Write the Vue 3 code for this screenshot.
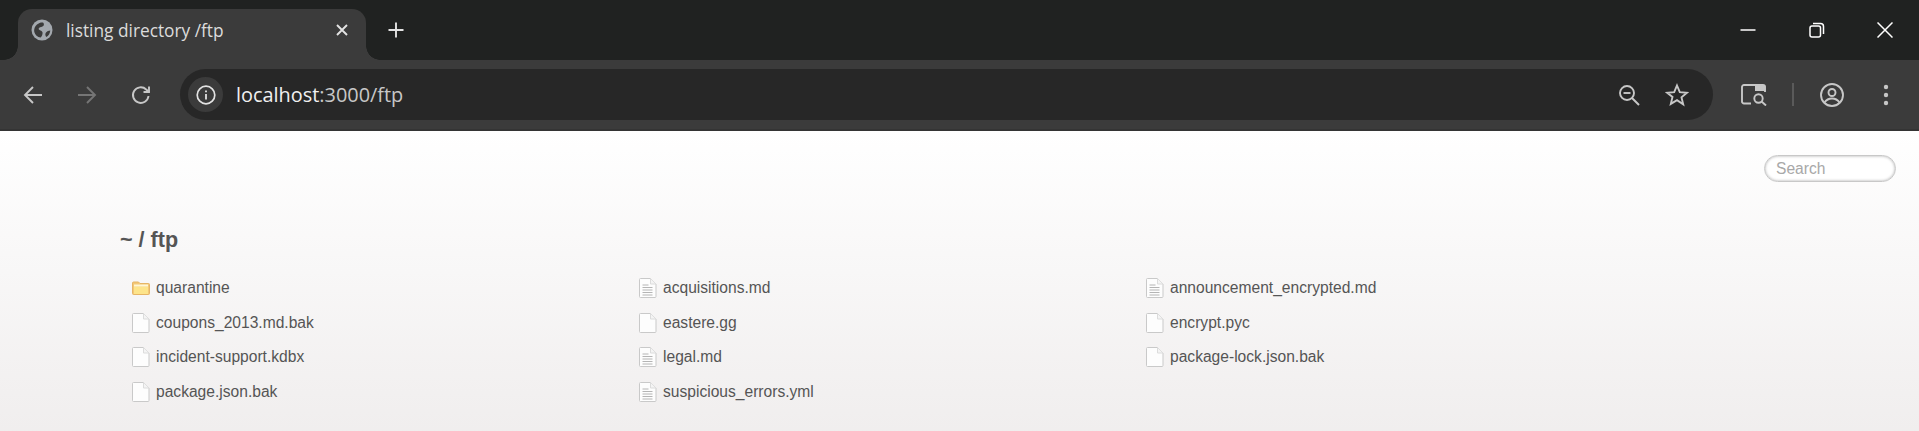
<script setup>
const doc = 'doc', blank = 'blank', folder = 'folder'
const files = [
  { name: 'quarantine', icon: folder },
  { name: 'acquisitions.md', icon: doc },
  { name: 'announcement_encrypted.md', icon: doc },
  { name: 'coupons_2013.md.bak', icon: blank },
  { name: 'eastere.gg', icon: blank },
  { name: 'encrypt.pyc', icon: blank },
  { name: 'incident-support.kdbx', icon: blank },
  { name: 'legal.md', icon: doc },
  { name: 'package-lock.json.bak', icon: blank },
  { name: 'package.json.bak', icon: blank },
  { name: 'suspicious_errors.yml', icon: doc },
]
</script>

<template>
  <div class="window">
    <header class="tabstrip">
      <div class="tab">
        <svg class="globe" width="22" height="22" viewBox="0 0 22 22">
          <circle cx="11" cy="11" r="10.500" fill="#a3a8ae" />
          <path d="M6 5.500c1.800-1.600 4-2.200 6-2 1 .9 1.200 2.300.5 3.300-1.200 1.400-3.300 1-4.500 2.200-.9 1 .1 2.200 1.500 2.500 1.500.4 2.400 1.600 2 3.300-.3 1.600-1 3-1.800 3.800C6.500 18 4 16 3.300 13c-.6-2.800.6-5.700 2.700-7.500z" fill="#3b3b3b" />
          <path d="M15 13.500c1-1.300 2.600-2 4.300-2-.3 3-1.700 5.300-4.100 6.500-1-1.500-1.200-3.300-.2-4.500z" fill="#3b3b3b" />
        </svg>
        <span class="tab-title">listing directory /ftp</span>
        <svg class="tab-close" width="12" height="12" viewBox="0 0 12 12">
          <path d="M1 1l10 10M11 1L1 11" stroke="#e3e3e3" stroke-width="1.900" fill="none" />
        </svg>
      </div>
      <svg class="new-tab" width="16" height="16" viewBox="0 0 16 16">
        <path d="M8 .5v15M.5 8h15" stroke="#e3e3e3" stroke-width="1.900" fill="none" />
      </svg>
      <div class="window-controls">
        <svg width="16" height="16" viewBox="0 0 16 16"><path d="M.5 8h15" stroke="#fff" stroke-width="1.500" /></svg>
        <svg width="16" height="16" viewBox="0 0 16 16" fill="none" stroke="#fff" stroke-width="1.500"><rect x="1" y="4" width="10.500" height="11" rx="2" /><path d="M4 1.500h7.500a3 3 0 0 1 3 3V12" /></svg>
        <svg width="16" height="16" viewBox="0 0 16 16"><path d="M.5.5l15 15M15.500.5l-15 15" stroke="#fff" stroke-width="1.500" fill="none" /></svg>
      </div>
    </header>

    <nav class="toolbar">
      <div class="nav-buttons">
        <svg width="20" height="20" viewBox="0 0 20 20" fill="none" stroke="#c7c7c7" stroke-width="1.900"><path d="M19 10H2M10 2l-8 8 8 8" /></svg>
        <svg width="20" height="20" viewBox="0 0 20 20" fill="none" stroke="#757575" stroke-width="1.900"><path d="M1 10h17M10 2l8 8-8 8" /></svg>
        <svg width="20" height="20" viewBox="0 0 20 20" fill="none" stroke="#c7c7c7" stroke-width="1.900"><path d="M17.500 11a7.800 7.800 0 1 1-2.300-6.500L18 7" /><path d="M18 1.500V7h-5.500" /></svg>
      </div>
      <div class="omnibox">
        <div class="info-chip">
          <svg width="20" height="20" viewBox="0 0 20 20" fill="none" stroke="#e3e3e3"><circle cx="10" cy="10" r="8.800" stroke-width="1.700" /><path d="M10 9v5.500" stroke-width="1.800" /><path d="M10 5.500v1.800" stroke-width="1.800" /></svg>
        </div>
        <span class="url"><span class="host">localhost</span>:3000/ftp</span>
        <div class="omni-actions">
          <svg width="22" height="22" viewBox="0 0 22 22" fill="none" stroke="#c7c7c7" stroke-width="1.900"><circle cx="9" cy="9" r="7" /><path d="M14 14l7 7" /><path d="M5.500 9h7" /></svg>
          <svg width="24" height="24" viewBox="0 0 24 24" fill="none" stroke="#c7c7c7" stroke-width="1.900"><path d="M12 2.500l2.800 6.600 7.200.6-5.500 4.700 1.700 7L12 17.200l-6.200 3.700 1.700-7L2 9.700l7.200-.6z" /></svg>
        </div>
      </div>
      <div class="tools">
        <svg class="tool-lens" width="26" height="22" viewBox="0 0 26 22" fill="none" stroke="#c7c7c7" stroke-width="1.900">
          <path d="M10 19.500H3a2 2 0 0 1-2-2V3a2 2 0 0 1 2-2h19a2 2 0 0 1 2 2v5" />
          <path d="M14 1h9a1.500 1.500 0 0 1 1.500 1.500V7H14z" fill="#c7c7c7" stroke="none" />
          <circle cx="17.500" cy="14.500" r="4.200" />
          <path d="M20.500 17.500l4.500 4" />
        </svg>
        <span class="divider"></span>
        <svg class="tool-avatar" width="24" height="24" viewBox="0 0 24 24" fill="none" stroke="#c7c7c7" stroke-width="1.900">
          <circle cx="12" cy="12" r="11" /><circle cx="12" cy="9.500" r="3.500" /><path d="M4.500 19.500c2-3 5-4 7.500-4s5.500 1 7.500 4" />
        </svg>
        <svg class="tool-menu" width="6" height="22" viewBox="0 0 6 22" fill="#c7c7c7"><circle cx="3" cy="3" r="2.200" /><circle cx="3" cy="11" r="2.200" /><circle cx="3" cy="19" r="2.200" /></svg>
      </div>
    </nav>

    <main class="page">
      <div class="search-row"><input class="search" type="text" placeholder="Search" /></div>
      <h1 class="crumb">~ / ftp</h1>
      <ul class="files">
        <li v-for="f in files" :key="f.name" class="file">
          <svg v-if="f.icon === 'folder'" width="18" height="20" viewBox="0 0 18 20">
            <path d="M.500 5a1 1 0 0 1 1-1h5l1.500 1.500h8.500a1 1 0 0 1 1 1v9a1 1 0 0 1-1 1h-15a1 1 0 0 1-1-1z" fill="#f3c777" stroke="#e6b565" />
            <path d="M2 8.500h14v7.500H2z" fill="#fde48a" />
            <path d="M2 6.500h14v2H2z" fill="#fff6d4" />
          </svg>
          <svg v-else width="18" height="20" viewBox="0 0 18 20">
            <path d="M.500 1.500a1 1 0 0 1 1-1h10l5.500 5.500v12.500a1 1 0 0 1-1 1h-14.500a1 1 0 0 1-1-1z" fill="#fdfdfd" stroke="#c9c9c9" />
            <path d="M11.500 .5V6H17" fill="#f4f4f4" stroke="#dcdcdc" />
            <path v-if="f.icon === 'doc'" d="M3.500 7h6M3.500 9.500h10M3.500 12h10M3.500 14.500h10M3.500 17h10" stroke="#b4b4b4" />
          </svg>
          <a class="file-name">{{ f.name }}</a>
        </li>
      </ul>
    </main>
  </div>
</template>

<style>
html, body { margin: 0; padding: 0; }
</style>

<style scoped>
.window { width: 1919px; height: 431px; overflow: hidden; display: flex; flex-direction: column; }

.tabstrip {
  height: 60px; flex: none; background: #202221; position: relative;
  display: flex; align-items: flex-end; padding-left: 18px; box-sizing: border-box;
}
.tab {
  width: 348px; height: 51px; background: #3b3b3b; border-radius: 14px 14px 0 0;
  display: flex; align-items: center; position: relative; padding: 0 0 9px 13px; box-sizing: border-box;
}
.tab::before, .tab::after { content: ""; position: absolute; bottom: 0; width: 14px; height: 14px; }
.tab::before { left: -14px; background: radial-gradient(circle at 0 0, #202221 13.500px, #3b3b3b 14px); }
.tab::after { right: -14px; background: radial-gradient(circle at 100% 0, #202221 13.500px, #3b3b3b 14px); }
.globe { flex: none; }
.tab-title { margin-left: 13px; font: 17.300px "Open Sans", sans-serif; color: #dcdcdc; white-space: nowrap; }
.tab-close { margin-left: auto; margin-right: 18px; }
.new-tab { position: absolute; left: 388px; top: 22px; }
.window-controls {
  position: absolute; right: 0; top: 22px; width: 179px; padding-right: 26px;
  box-sizing: border-box; display: flex; justify-content: space-between; align-items: flex-start;
}

.toolbar {
  height: 71px; flex: none; background: #3b3b3b; border-bottom: 2px solid #343434; box-sizing: border-box;
  display: flex; align-items: flex-start; padding: 9px 0 0 23px;
}
.nav-buttons { display: flex; gap: 34px; padding-top: 16px; width: 157px; flex: none; }
.omnibox {
  width: 1533px; height: 51px; background: #272727; border-radius: 26px; flex: none;
  display: flex; align-items: center; padding: 0 24px 0 8px; box-sizing: border-box;
}
.info-chip {
  width: 35px; height: 35px; border-radius: 50%; background: #3b3b3b;
  display: flex; align-items: center; justify-content: center; flex: none;
}
.url { margin-left: 13px; font: 19.900px "Open Sans", sans-serif; color: #c7c7c7; white-space: nowrap; }
.host { color: #f0f0f0; }
.omni-actions { margin-left: auto; display: flex; align-items: center; gap: 25px; }
.tools { display: flex; align-items: center; margin-left: 28px; height: 51px; }
.tool-lens { flex: none; }
.divider { width: 2px; height: 23px; background: #5a5a5a; margin: 0 26px 0 25px; }
.tool-menu { margin-left: 39px; }

.page {
  flex: 1; background: linear-gradient(#fff, #ece9e9 128%); color: #555;
  font: 15.600px "Liberation Sans", Arial, sans-serif; padding: 24px 0 0 120px; box-sizing: border-box;
}
.search-row { display: flex; justify-content: flex-end; padding-right: 23px; }
.search {
  width: 132px; height: 27px; box-sizing: border-box; border: 1px solid #c8c8c8; border-radius: 14px;
  box-shadow: inset 0 0 3px #aaa; background: #fff; padding: 0 11px;
  font: 15.600px "Liberation Sans", Arial, sans-serif; outline: none;
}
.search::placeholder { color: #a8a8a8; }
.crumb { margin: 44px 0 0; font-size: 21.600px; font-weight: 700; color: #555; line-height: 28px; }
.files {
  list-style: none; margin: 17px 0 0; padding: 0 0 0 12px;
  display: grid; grid-template-columns: repeat(3, 507px); grid-auto-rows: 34.500px;
}
.file { display: flex; align-items: center; gap: 6px; }
.file svg { flex: none; }
.file-name { color: #555; }
</style>
